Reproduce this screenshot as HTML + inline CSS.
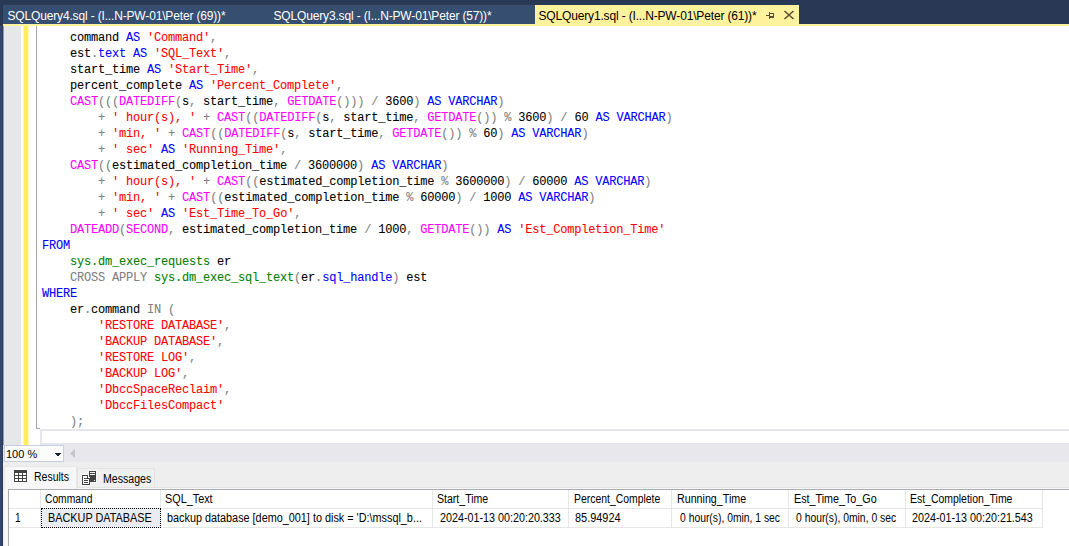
<!DOCTYPE html>
<html><head><meta charset="utf-8">
<style>
*{margin:0;padding:0;box-sizing:border-box}
html,body{width:1069px;height:546px;overflow:hidden;background:#293955;position:relative}
.abs{position:absolute}
.tabtxt{font-family:"Liberation Sans",sans-serif;font-size:12px;letter-spacing:-0.16px;white-space:nowrap;position:absolute;top:9px;line-height:14px}
#code{position:absolute;left:42px;top:30px;font-family:"Liberation Mono",monospace;font-size:12px;letter-spacing:-0.2px;line-height:16px;white-space:pre;color:#000;-webkit-text-stroke:0.08px}
.k{color:#0000ff} .s{color:#ff0000} .f{color:#ff00ff} .o{color:#808080} .g{color:#008000}
.ui{font-family:"Liberation Sans",sans-serif;font-size:12px;white-space:nowrap;position:absolute;line-height:14px;color:#000}
.gt{font-family:"Liberation Sans",sans-serif;font-size:12px;white-space:pre;position:absolute;line-height:14px;color:#000}
.gt span,.ui span{display:inline-block;transform-origin:0 0}
</style></head><body>
<div class="abs" style="left:3px;top:5px;width:532px;height:19px;background:#364e6f"></div>
<div class="abs" style="left:535px;top:5px;width:264px;height:19px;background:#fff29d"></div>
<div class="abs" style="left:3px;top:24px;width:1066px;height:2px;background:#fff29d"></div>
<div class="tabtxt" style="left:7.5px;color:#fff">SQLQuery4.sql - (I...N-PW-01\Peter (69))*</div>
<div class="tabtxt" style="left:273.5px;color:#fff">SQLQuery3.sql - (I...N-PW-01\Peter (57))*</div>
<div class="tabtxt" style="left:538.5px;color:#000">SQLQuery1.sql - (I...N-PW-01\Peter (61))*</div>
<svg class="abs" style="left:765px;top:11px" width="11" height="9" shape-rendering="crispEdges">
<g fill="#5e5032"><rect x="1" y="4" width="3" height="1"/><rect x="4" y="1" width="1" height="7"/>
<rect x="5" y="2" width="4" height="1"/><rect x="8" y="2" width="1" height="5"/><rect x="5" y="5" width="4" height="2"/></g>
</svg>
<svg class="abs" style="left:783px;top:10px" width="12" height="10" viewBox="0 0 12 10"><path d="M1.5 1L10.5 9M10.5 1L1.5 9" stroke="#5e5032" stroke-width="1.6" fill="none"/></svg>
<div class="abs" style="left:3px;top:26px;width:1066px;height:419px;background:#fff"></div>
<div class="abs" style="left:3px;top:26px;width:18px;height:419px;background:#e6e7e8"></div>
<div class="abs" style="left:23px;top:26px;width:6px;height:419px;background:#fff6b5"></div><div class="abs" style="left:24px;top:26px;width:4px;height:419px;background:#ffed5f"></div><div class="abs" style="left:3px;top:26px;width:1px;height:520px;background:#8a9ac0"></div><div class="abs" style="left:0px;top:26px;width:2px;height:520px;background:#33476a"></div><div class="abs" style="left:2px;top:26px;width:1px;height:520px;background:#2b3c5b"></div>
<div class="abs" style="left:36px;top:26px;width:1px;height:403px;background:#a5a5a5"></div>
<div class="abs" style="left:36px;top:428px;width:4px;height:1px;background:#a5a5a5"></div>
<div class="abs" style="left:40px;top:429px;width:1029px;height:16px;border:2px solid #e6e6ee;border-right:none"></div>
<div id="code">    command <span class="k">AS</span> <span class="s">&#x27;Command&#x27;</span><span class="o">,</span>
    est<span class="o">.</span><span class="k">text</span> <span class="k">AS</span> <span class="s">&#x27;SQL_Text&#x27;</span><span class="o">,</span>
    start_time <span class="k">AS</span> <span class="s">&#x27;Start_Time&#x27;</span><span class="o">,</span>
    percent_complete <span class="k">AS</span> <span class="s">&#x27;Percent_Complete&#x27;</span><span class="o">,</span>
    <span class="f">CAST</span><span class="o">(((</span><span class="f">DATEDIFF</span><span class="o">(</span>s<span class="o">,</span> start_time<span class="o">,</span> <span class="f">GETDATE</span><span class="o">()))</span> <span class="o">/</span> 3600<span class="o">)</span> <span class="k">AS VARCHAR</span><span class="o">)</span>
        <span class="o">+</span> <span class="s">&#x27; hour(s), &#x27;</span> <span class="o">+</span> <span class="f">CAST</span><span class="o">((</span><span class="f">DATEDIFF</span><span class="o">(</span>s<span class="o">,</span> start_time<span class="o">,</span> <span class="f">GETDATE</span><span class="o">())</span> <span class="o">%</span> 3600<span class="o">)</span> <span class="o">/</span> 60 <span class="k">AS VARCHAR</span><span class="o">)</span>
        <span class="o">+</span> <span class="s">&#x27;min, &#x27;</span> <span class="o">+</span> <span class="f">CAST</span><span class="o">((</span><span class="f">DATEDIFF</span><span class="o">(</span>s<span class="o">,</span> start_time<span class="o">,</span> <span class="f">GETDATE</span><span class="o">())</span> <span class="o">%</span> 60<span class="o">)</span> <span class="k">AS VARCHAR</span><span class="o">)</span>
        <span class="o">+</span> <span class="s">&#x27; sec&#x27;</span> <span class="k">AS</span> <span class="s">&#x27;Running_Time&#x27;</span><span class="o">,</span>
    <span class="f">CAST</span><span class="o">((</span>estimated_completion_time <span class="o">/</span> 3600000<span class="o">)</span> <span class="k">AS VARCHAR</span><span class="o">)</span>
        <span class="o">+</span> <span class="s">&#x27; hour(s), &#x27;</span> <span class="o">+</span> <span class="f">CAST</span><span class="o">((</span>estimated_completion_time <span class="o">%</span> 3600000<span class="o">)</span> <span class="o">/</span> 60000 <span class="k">AS VARCHAR</span><span class="o">)</span>
        <span class="o">+</span> <span class="s">&#x27;min, &#x27;</span> <span class="o">+</span> <span class="f">CAST</span><span class="o">((</span>estimated_completion_time <span class="o">%</span> 60000<span class="o">)</span> <span class="o">/</span> 1000 <span class="k">AS VARCHAR</span><span class="o">)</span>
        <span class="o">+</span> <span class="s">&#x27; sec&#x27;</span> <span class="k">AS</span> <span class="s">&#x27;Est_Time_To_Go&#x27;</span><span class="o">,</span>
    <span class="f">DATEADD</span><span class="o">(</span><span class="f">SECOND</span><span class="o">,</span> estimated_completion_time <span class="o">/</span> 1000<span class="o">,</span> <span class="f">GETDATE</span><span class="o">())</span> <span class="k">AS</span> <span class="s">&#x27;Est_Completion_Time&#x27;</span>
<span class="k">FROM</span>
    <span class="g">sys.dm_exec_requests</span> er
    <span class="o">CROSS APPLY</span> <span class="g">sys.dm_exec_sql_text</span><span class="o">(</span>er<span class="o">.</span><span class="k">sql_handle</span><span class="o">)</span> est
<span class="k">WHERE</span>
    er<span class="o">.</span>command <span class="o">IN</span> <span class="o">(</span>
        <span class="s">&#x27;RESTORE DATABASE&#x27;</span><span class="o">,</span>
        <span class="s">&#x27;BACKUP DATABASE&#x27;</span><span class="o">,</span>
        <span class="s">&#x27;RESTORE LOG&#x27;</span><span class="o">,</span>
        <span class="s">&#x27;BACKUP LOG&#x27;</span><span class="o">,</span>
        <span class="s">&#x27;DbccSpaceReclaim&#x27;</span><span class="o">,</span>
        <span class="s">&#x27;DbccFilesCompact&#x27;</span>
    <span class="o">);</span></div>
<div class="abs" style="left:3px;top:445px;width:1066px;height:17px;background:#e8e8ec"></div>
<div class="abs" style="left:4px;top:445px;width:60px;height:17px;background:#fcfcfc;border:1px solid #c5cfe0"></div>
<div class="ui" style="left:6px;top:447px;font-size:11px">100 %</div>
<svg class="abs" style="left:55px;top:453px" width="6" height="3" shape-rendering="crispEdges"><path d="M0 0H6V1H5V2H4V3H2V2H1V1H0Z" fill="#1b2033"/></svg>
<svg class="abs" style="left:70px;top:449px" width="5" height="9"><path d="M5 0V9L0 4.5Z" fill="#c5c6ce"/></svg>
<div class="abs" style="left:3px;top:462px;width:1066px;height:84px;background:#eeeeee"></div>
<div class="abs" style="left:4px;top:487px;width:1065px;height:59px;background:#f8f8f8;border-top:1px solid #e5e5e5"></div>
<div class="abs" style="left:4px;top:466px;width:73px;height:23px;background:#f7f7f7;border:1px solid #e8e8e8;border-bottom:none"></div>
<div class="abs" style="left:77px;top:468px;width:78px;height:20px;background:#f0f0f0;border:1px solid #e4e4e4"></div>
<svg class="abs" style="left:13px;top:469px" width="15" height="14" shape-rendering="crispEdges">
<rect x="0" y="0" width="15" height="14" fill="#fbfbfb"/>
<rect x="1" y="1" width="13" height="12" fill="#424242"/>
<g fill="#fff"><rect x="2" y="4" width="3" height="2"/><rect x="6" y="4" width="3" height="2"/><rect x="10" y="4" width="3" height="2"/>
<rect x="2" y="7" width="3" height="2"/><rect x="6" y="7" width="3" height="2"/><rect x="10" y="7" width="3" height="2"/>
<rect x="2" y="10" width="3" height="2"/><rect x="6" y="10" width="3" height="2"/><rect x="10" y="10" width="3" height="2"/></g>
</svg>
<svg class="abs" style="left:81px;top:470px" width="17" height="16" shape-rendering="crispEdges">
<rect x="7" y="0" width="9" height="13" fill="#f7f7f7"/>
<rect x="0" y="4" width="10" height="12" fill="#f7f7f7"/>
<rect x="8" y="1" width="7" height="11" fill="#424242"/>
<rect x="9" y="2" width="5" height="1" fill="#fff"/>
<rect x="9" y="4" width="5" height="1" fill="#fff"/>
<rect x="13" y="10" width="1" height="1" fill="#fff"/>
<path d="M1 5H6L9 8V15H1Z" fill="#fff"/>
<path d="M1 5H6V6H1ZM1 5H2V15H1ZM1 14H9V15H1ZM8 8H9V15H8ZM6 5H7V8H9V9H6Z" fill="#424242"/>
<rect x="3" y="8" width="4" height="1" fill="#424242"/>
<rect x="3" y="10" width="4" height="1" fill="#424242"/>
<rect x="3" y="12" width="4" height="1" fill="#424242"/>
</svg>
<div class="ui" style="left:33.53px;top:470px"><span style="transform:scaleX(0.8744)">Results</span></div>
<div class="ui" style="left:102.72px;top:472px"><span style="transform:scaleX(0.883)">Messages</span></div>
<div class="abs" style="left:8px;top:489px;width:1061px;height:57px;background:#fff;border-top:1px solid #a9abb0;border-left:1px solid #a9abb0"></div>
<div class="abs" style="left:9px;top:508px;width:1033px;height:1px;background:#e6e6e6"></div>
<div class="abs" style="left:9px;top:527px;width:1033px;height:1px;background:#e6e6e6"></div>
<div class="abs" style="left:40px;top:490px;width:1px;height:38px;background:#e6e6e6"></div>
<div class="abs" style="left:160px;top:490px;width:1px;height:38px;background:#e6e6e6"></div>
<div class="abs" style="left:432px;top:490px;width:1px;height:38px;background:#e6e6e6"></div>
<div class="abs" style="left:568px;top:490px;width:1px;height:38px;background:#e6e6e6"></div>
<div class="abs" style="left:671px;top:490px;width:1px;height:38px;background:#e6e6e6"></div>
<div class="abs" style="left:788px;top:490px;width:1px;height:38px;background:#e6e6e6"></div>
<div class="abs" style="left:905px;top:490px;width:1px;height:38px;background:#e6e6e6"></div>
<div class="abs" style="left:1042px;top:490px;width:1px;height:38px;background:#e6e6e6"></div>
<div class="abs" style="left:41px;top:508px;width:120px;height:20px;background:#e9edf3;border:1px dotted #000"></div>
<div class="gt" style="left:44.74px;top:492px"><span style="transform:scaleX(0.8556)">Command</span></div>
<div class="gt" style="left:165.3px;top:492px"><span style="transform:scaleX(0.9038)">SQL_Text</span></div>
<div class="gt" style="left:437.22px;top:492px"><span style="transform:scaleX(0.8789)">Start_Time</span></div>
<div class="gt" style="left:573.63px;top:492px"><span style="transform:scaleX(0.8684)">Percent_Complete</span></div>
<div class="gt" style="left:676.61px;top:492px"><span style="transform:scaleX(0.8908)">Running_Time</span></div>
<div class="gt" style="left:793.6px;top:492px"><span style="transform:scaleX(0.8956)">Est_Time_To_Go</span></div>
<div class="gt" style="left:910.33px;top:492px"><span style="transform:scaleX(0.8707)">Est_Completion_Time</span></div>
<div class="gt" style="left:15.16px;top:511px"><span style="transform:scaleX(0.84)">1</span></div>
<div class="gt" style="left:47.59px;top:511px"><span style="transform:scaleX(0.9053)">BACKUP DATABASE</span></div>
<div class="gt" style="left:166.9px;top:511px"><span style="transform:scaleX(0.9036)">backup database [demo_001] to disk = &#x27;D:\mssql_b...</span></div>
<div class="gt" style="left:439.6px;top:511px"><span style="transform:scaleX(0.8962)">2024-01-13 00:20:20.333</span></div>
<div class="gt" style="left:575.29px;top:511px"><span style="transform:scaleX(0.9102)">85.94924</span></div>
<div class="gt" style="left:679.5px;top:511px"><span style="transform:scaleX(0.8621)">0 hour(s), 0min, 1 sec</span></div>
<div class="gt" style="left:796.2px;top:511px"><span style="transform:scaleX(0.8629)">0 hour(s), 0min, 0 sec</span></div>
<div class="gt" style="left:912.4px;top:511px"><span style="transform:scaleX(0.8962)">2024-01-13 00:20:21.543</span></div>
</body></html>
